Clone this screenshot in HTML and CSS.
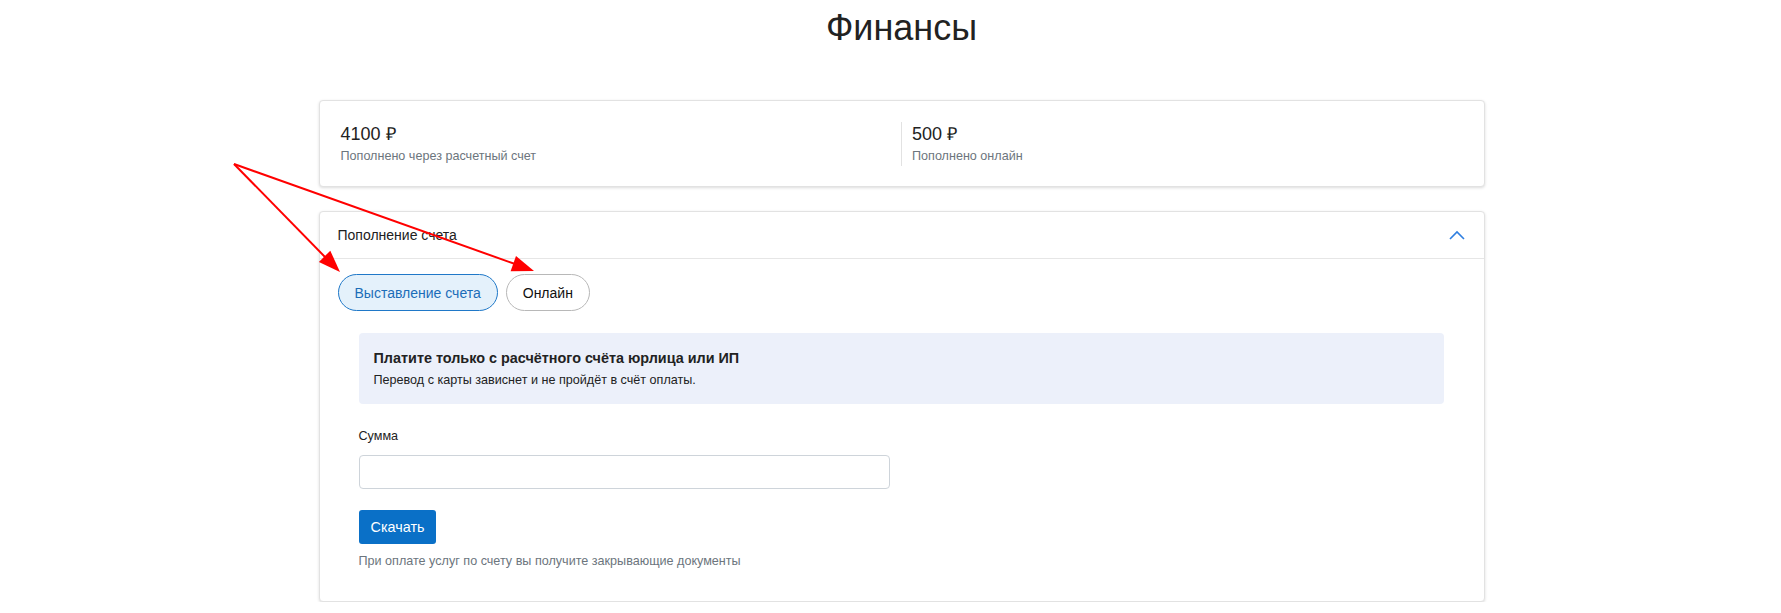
FILE: index.html
```html
<!DOCTYPE html>
<html lang="ru">
<head>
    <meta charset="UTF-8">
    <meta name="viewport" content="width=device-width, initial-scale=1.0">
    <title>Финансы</title>
    <link rel="stylesheet" href="styles.css">
</head>
<body>
    <div class="page">
        <div class="container">
            <h1 class="page-title">Финансы</h1>

            <div class="card stats">
                <div class="stat">
                    <div class="stat-value">4100 ₽</div>
                    <div class="stat-label">Пополнено через расчетный счет</div>
                </div>
                <div class="stat stat-second">
                    <div class="stat-value">500 ₽</div>
                    <div class="stat-label">Пополнено онлайн</div>
                </div>
            </div>

            <div class="card topup">
                <div class="topup-header">
                    <span>Пополнение счета</span>
                    <svg class="chevron" width="16" height="10" viewBox="0 0 16 10">
                        <polyline points="1,9 8,2 15,9" fill="none" stroke="#2f7fe0" stroke-width="1.6"/>
                    </svg>
                </div>
                <div class="topup-body">
                    <div class="tabs">
                        <button class="tab tab-active">Выставление счета</button>
                        <button class="tab">Онлайн</button>
                    </div>
                    <div class="pane">
                        <div class="notice">
                            <div class="notice-title">Платите только с расчётного счёта юрлица или ИП</div>
                            <div class="notice-text">Перевод с карты зависнет и не пройдёт в счёт оплаты.</div>
                        </div>
                        <label class="field-label" for="amount">Сумма</label>
                        <input id="amount" class="field-input" type="text">
                        <button class="btn-primary">Скачать</button>
                        <p class="hint">При оплате услуг по счету вы получите закрывающие документы</p>
                    </div>
                </div>
            </div>
        </div>
    </div>

    <svg class="arrows" width="1781" height="613" viewBox="0 0 1781 613">
        <line x1="234" y1="164" x2="326" y2="258" stroke="#ff0000" stroke-width="2"/>
        <line x1="234" y1="164" x2="515" y2="264" stroke="#ff0000" stroke-width="2"/>
        <path d="M340,272 L318.9,261.9 L330.3,250.7 z" fill="#ff0000"/>
        <path d="M534,271 L510.6,271.2 L516,256.1 z" fill="#ff0000"/>
    </svg>
</body>
</html>
```

FILE: styles.css
```css
body {
    margin: 0;
    background-color: #fff;
    font-family: "Liberation Sans", Arial, sans-serif;
    color: #212121;
}
.page {
    padding-left: 22px;
}
.container {
    max-width: 1166px;
    margin: 0 auto;
}
.page-title {
    margin: 0;
    padding-top: 8px;
    font-size: 36px;
    line-height: 40px;
    font-weight: normal;
    text-align: center;
    color: #222;
}
.card {
    background: #fff;
    border: 1px solid #e2e2e2;
    border-radius: 4px;
    box-shadow: 0 1px 3px rgba(0, 0, 0, 0.14);
}
.stats {
    display: grid;
    grid-template-columns: 1fr 1fr;
    margin-top: 52px;
    padding: 21px 22px 20px 21px;
}
.stat-value {
    font-size: 18px;
    line-height: 24px;
    color: #222;
}
.stat-label {
    font-size: 12.6px;
    line-height: 20px;
    color: #6c757d;
}
.stat-second {
    border-left: 1px solid #e2e2e2;
    padding-left: 10px;
}
.topup {
    margin-top: 24px;
}
.topup-header {
    display: flex;
    justify-content: space-between;
    align-items: center;
    height: 46px;
    padding: 0 19px 0 18px;
    border-bottom: 1px solid #e6e6e6;
    font-size: 14px;
    color: #212121;
}
.chevron {
    display: block;
}
.topup-body {
    padding: 15px 20px 20px 18px;
}
.tabs {
    display: flex;
    gap: 8px;
}
.tab {
    height: 37px;
    padding: 0 16px;
    border: 1px solid #b8b8b8;
    border-radius: 19px;
    background: #fff;
    font-family: inherit;
    font-size: 14px;
    color: #111;
}
.tab-active {
    background: #e4f1fb;
    border-color: #1f78c8;
    color: #1b6db8;
}
.pane {
    padding: 22px 20px 11px 21px;
}
.notice {
    padding: 15px 15px 15px;
    background: #ecf0fa;
    border-radius: 4px;
}
.notice-title {
    font-size: 14.4px;
    line-height: 20px;
    font-weight: bold;
    color: #222;
}
.notice-text {
    margin-top: 3px;
    font-size: 12.6px;
    line-height: 18px;
    color: #222;
}
.field-label {
    display: block;
    margin-top: 23px;
    font-size: 12.6px;
    line-height: 18px;
    color: #222;
}
.field-input {
    display: block;
    box-sizing: border-box;
    width: 531px;
    height: 34px;
    margin-top: 10px;
    border: 1px solid #ced4da;
    border-radius: 4px;
}
.btn-primary {
    display: block;
    height: 34px;
    margin-top: 21px;
    padding: 0 12px;
    border: none;
    border-radius: 3px;
    background: #0a70c7;
    font-family: inherit;
    font-size: 14.4px;
    color: #fff;
}
.hint {
    margin: 8px 0 0;
    font-size: 12.6px;
    line-height: 18px;
    color: #6c757d;
}
.arrows {
    position: absolute;
    top: 0;
    left: 0;
    pointer-events: none;
}
```
